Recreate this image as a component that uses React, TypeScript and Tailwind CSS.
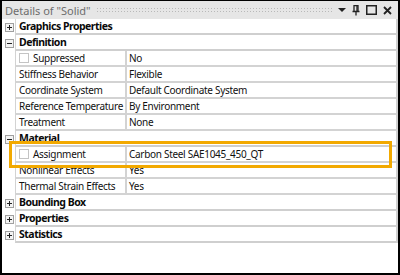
import React from 'react';

type Row = { label: string; value: string; check?: boolean };
type Group = { title: string; open: boolean; rows?: Row[] };

const groups: Group[] = [
  { title: 'Graphics Properties', open: false },
  {
    title: 'Definition',
    open: true,
    rows: [
      { label: 'Suppressed', value: 'No', check: true },
      { label: 'Stiffness Behavior', value: 'Flexible' },
      { label: 'Coordinate System', value: 'Default Coordinate System' },
      { label: 'Reference Temperature', value: 'By Environment' },
      { label: 'Treatment', value: 'None' },
    ],
  },
  {
    title: 'Material',
    open: true,
    rows: [
      { label: 'Assignment', value: 'Carbon Steel SAE1045_450_QT', check: true },
      { label: 'Nonlinear Effects', value: 'Yes' },
      { label: 'Thermal Strain Effects', value: 'Yes' },
    ],
  },
  { title: 'Bounding Box', open: false },
  { title: 'Properties', open: false },
  { title: 'Statistics', open: false },
];

function Expander({ open }: { open: boolean }) {
  return (
    <div className="w-[9px] h-[9px] border border-[#a0a0a0] bg-[#f4f4f4] flex items-center justify-center relative">
      <div className="absolute w-[5px] h-[1px] bg-[#222]" />
      {!open && <div className="absolute w-[1px] h-[5px] bg-[#222]" />}
    </div>
  );
}

function Check() {
  return <div className="w-[10px] h-[10px] border border-[#c4c4c4] bg-white mr-[4px] shrink-0" />;
}

export default function App() {
  return (
    <div className="w-[400px] h-[275px] bg-white border-2 border-black border-t-[1px] flex flex-col relative overflow-hidden font-['Noto_Sans',sans-serif] text-[10px] tracking-[-0.3px] text-[#111]">
      {/* title bar */}
      <div className="h-[18px] bg-[#e6e6e6] flex items-center pl-[3px] pr-[6px] shrink-0">
        <span className="text-[#6d6d6d] text-[11px] tracking-normal leading-none whitespace-nowrap">Details of "Solid"</span>
        <div className="flex-1 h-[6px] mx-[5px] bg-[radial-gradient(#b9b9b9_0.7px,transparent_0.8px)] bg-[length:3px_3px]" />
        <div className="flex items-center gap-[6px]">
          <svg width="8" height="6" viewBox="0 0 8 6"><path d="M0 1h8L4 5z" fill="#222" /></svg>
          <svg width="8" height="11" viewBox="0 0 8 11">
            <path d="M2 0.5h4v6H2zM0.5 6.5h7M4 6.5v4" stroke="#222" strokeWidth="1.3" fill="none" />
            <path d="M5 1v5" stroke="#222" strokeWidth="1.3" />
          </svg>
          <svg width="11" height="10" viewBox="0 0 11 10"><rect x="0.75" y="0.75" width="9.5" height="8.5" stroke="#222" strokeWidth="1.5" fill="none" /></svg>
          <svg width="9" height="9" viewBox="0 0 9 9"><path d="M1 1l7 7M8 1L1 8" stroke="#222" strokeWidth="1.8" /></svg>
        </div>
      </div>

      {/* property grid */}
      <div className="flex flex-col pr-[1px]">
        {groups.map((g) => (
          <div key={g.title} className="flex flex-col">
            <div className="flex h-[16px]">
              <div className="w-[13px] flex items-center justify-center shrink-0 pl-[1px]">
                <Expander open={g.open} />
              </div>
              <div className="flex-1 flex items-center pl-[3px] border-l border-b-2 border-[#cfcfcf] border-l-[#d6d6d6] font-bold text-[10.5px] tracking-[-0.5px] text-[#0a0a0a] leading-none">
                {g.title}
              </div>
            </div>
            {g.open &&
              g.rows!.map((r) => (
                <div key={r.label} className="flex h-[16px]">
                  <div className="w-[13px] shrink-0" />
                  <div className="w-[112px] shrink-0 flex items-center pl-[3px] border-l border-b-2 border-r-2 border-[#d3d3d3] whitespace-nowrap leading-none">
                    {r.check && <Check />}
                    {r.label}
                  </div>
                  <div className="flex-1 flex items-center pl-[2px] border-b-2 border-[#d3d3d3] whitespace-nowrap leading-none">
                    {r.value}
                  </div>
                </div>
              ))}
          </div>
        ))}
      </div>

      {/* highlight around the material assignment */}
      <div className="absolute left-[7px] top-[140px] w-[383px] h-[27px] border-[3px] border-[#f2a900]" />
      <div className="absolute right-0 top-[18px] h-[224px] w-[2px] bg-[#d0d0d0]" />
    </div>
  );
}
